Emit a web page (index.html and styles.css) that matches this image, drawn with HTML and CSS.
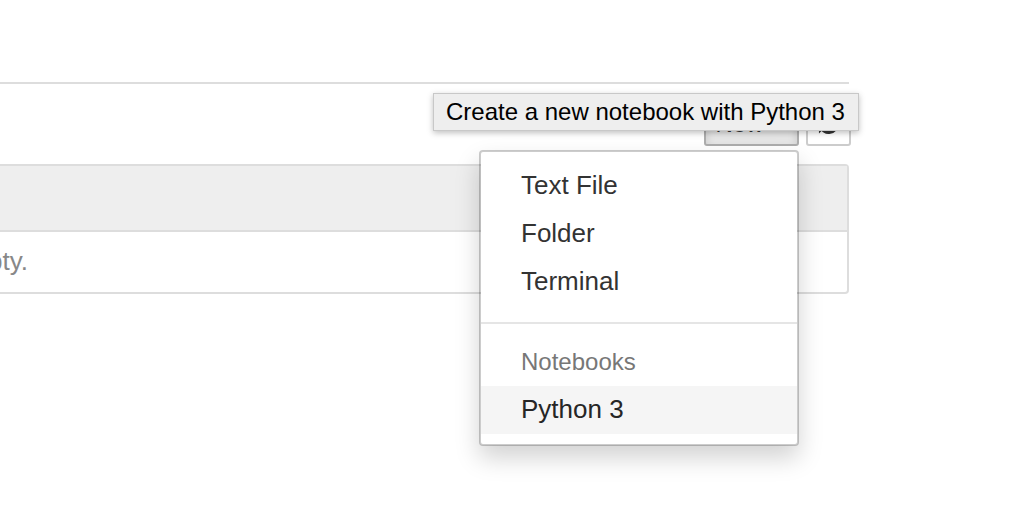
FILE: index.html
```html
<!DOCTYPE html>
<html lang="en">
<head>
<meta charset="utf-8">
<title>Notebook list</title>
<link rel="stylesheet" href="styles.css">
</head>
<body>
<main class="page">
  <header class="page-header"></header>
  <div class="toolbar">
    <div class="dropdown">
      <button class="btn btn-new" type="button" aria-haspopup="true" aria-expanded="true">New <span class="caret"></span></button>
      <ul class="menu">
        <li><a class="item" href="#text">Text File</a></li>
        <li><a class="item" href="#folder">Folder</a></li>
        <li><a class="item" href="#terminal">Terminal</a></li>
        <li class="divider"></li>
        <li class="menu-header">Notebooks</li>
        <li><a class="item active" href="#python3">Python 3</a></li>
      </ul>
    </div>
    <button class="btn btn-refresh" type="button" aria-label="Refresh">
      <svg width="22" height="22" viewBox="0 0 22 22" fill="none" stroke="#333" stroke-width="3"><path d="M2.500 9A8.500 8.500 0 0 1 18 6M19.500 13A8.500 8.500 0 0 1 4 16"/><path d="M21 1v8h-8zM1 21v-8h8z" fill="#333" stroke="none"/></svg>
    </button>
    <div class="tooltip" role="tooltip">Create a new notebook with Python 3</div>
  </div>
  <section class="list">
    <div class="list-header"></div>
    <div class="list-row"><span class="list-text">pty.</span></div>
  </section>
</main>
</body>
</html>
```
FILE: styles.css
```css
* { box-sizing: border-box; }
body {
  margin: 0;
  background: #fff;
  color: #333;
  font-family: "Liberation Sans", Arial, sans-serif;
  font-size: 26px;
  line-height: 36px;
}
.page { min-height: 100vh; padding-right: 163px; }
.page-header { height: 84px; border-bottom: 2px solid #ddd; }
.toolbar {
  position: relative;
  display: flex;
  justify-content: flex-end;
  gap: 7px;
  margin-right: -2px;
  padding: 18px 0;
}
.dropdown { position: relative; }
.btn {
  display: flex;
  align-items: center;
  justify-content: center;
  height: 44px;
  padding: 0 10px;
  border: 2px solid #ccc;
  border-radius: 3px;
  background: #fff;
  color: #333;
  font: 24px/36px "Liberation Sans", Arial, sans-serif;
}
.btn-new { width: 95px; gap: 8px; background: #e6e6e6; border-color: #adadad; box-shadow: inset 0 6px 10px rgba(0, 0, 0, .125); }
.btn-refresh { width: 45px; }
.caret { border-top: 8px solid #333; border-left: 8px solid transparent; border-right: 8px solid transparent; }
.menu {
  position: absolute;
  z-index: 1;
  top: 48px;
  right: 0;
  width: 320px;
  margin: 0;
  padding: 10px 0;
  list-style: none;
  background: #fff;
  background-clip: padding-box;
  border: 2px solid rgba(0, 0, 0, .2);
  border-radius: 4px;
  box-shadow: 0 12px 24px rgba(0, 0, 0, .175);
}
.item {
  display: block;
  padding: 5px 40px 7px;
  color: #333;
  text-decoration: none;
}
.item.active { background: #f5f5f5; color: #262626; }
.divider { height: 2px; margin: 16px 0; background: #e5e5e5; }
.menu-header { padding: 4px 40px 6px; color: #777; font-size: 24px; }
.tooltip {
  position: absolute;
  z-index: 2;
  top: 9px;
  right: -8px;
  width: 426px;
  padding: 0 12px;
  border: 1px solid #c8c8c8;
  background: #eee;
  color: #000;
  font-size: 24px;
  white-space: nowrap;
  box-shadow: 0 2px 6px rgba(0, 0, 0, .25);
}
.list {
  border: 2px solid #ddd;
  border-left: 0;
  border-radius: 0 4px 4px 0;
}
.list-header { height: 66px; background: #eee; border-bottom: 2px solid #ddd; }
.list-row { padding: 11px 0 13px; }
.list-text {
  display: flex;
  justify-content: flex-end;
  width: 28px;
  overflow: hidden;
  color: #888;
}
```
